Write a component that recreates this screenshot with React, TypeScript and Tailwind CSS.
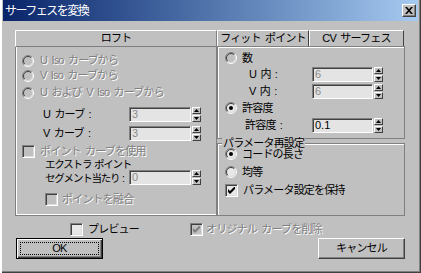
import React from 'react';

const dis = 'text-[#808080] [text-shadow:1px_1px_0_#fff]';

function Radio({ on, off }: { on?: boolean; off?: boolean }) {
  return (
    <svg width="12" height="12" viewBox="0 0 12 12" className="shrink-0">
      <circle cx="6" cy="6" r="4.5" fill={off ? '#c0c0c0' : '#e8e8e8'} />
      <path d="M2.1 9.9 A5.5 5.5 0 0 1 9.9 2.1" fill="none" stroke="#808080" />
      <path d="M9.9 2.1 A5.5 5.5 0 0 1 2.1 9.9" fill="none" stroke="#fff" />
      <path d="M2.8 9.2 A4.5 4.5 0 0 1 9.2 2.8" fill="none" stroke="#404040" />
      <path d="M9.2 2.8 A4.5 4.5 0 0 1 2.8 9.2" fill="none" stroke="#dcdcdc" />
      {on && <circle cx="6" cy="6" r="2" fill="#000" />}
    </svg>
  );
}

function Check({ on, off }: { on?: boolean; off?: boolean }) {
  return (
    <div
      className={`w-[13px] h-[13px] shrink-0 border border-t-[#808080] border-l-[#808080] border-r-white border-b-white shadow-[inset_1px_1px_0_#404040,inset_-1px_-1px_0_#dcdcdc] flex items-center justify-center ${
        off ? 'bg-[#c0c0c0]' : 'bg-[#e8e8e8]'
      }`}
    >
      {on && (
        <svg width="7" height="7" viewBox="0 0 7 7">
          <path d="M0 2v3l2 2 5-5V-1L2 4z" fill={off ? '#808080' : '#000'} />
        </svg>
      )}
    </div>
  );
}

function Spin() {
  const half =
    'h-[7px] w-[9px] bg-[#c0c0c0] border border-t-white border-l-white border-r-[#404040] border-b-[#404040] flex items-center justify-center';
  return (
    <div className="flex flex-col ml-[1px] h-[15px] justify-between shrink-0">
      <div className={half}>
        <svg width="5" height="3" viewBox="0 0 5 3">
          <path d="M2.5 0L5 3H0z" fill="#000" />
        </svg>
      </div>
      <div className={half}>
        <svg width="5" height="3" viewBox="0 0 5 3">
          <path d="M0 0h5L2.5 3z" fill="#000" />
        </svg>
      </div>
    </div>
  );
}

function Field({ value, w, off }: { value: string; w: string; off?: boolean }) {
  return (
    <div
      className={`${w} h-[15px] shrink-0 bg-[#e4e4e4] border border-t-[#808080] border-l-[#808080] border-r-white border-b-white shadow-[inset_1px_1px_0_#404040] pl-[2px] leading-[13px] tracking-normal [text-shadow:none] ${
        off ? 'text-[#8a8a8a]' : 'text-black'
      }`}
    >
      {value}
    </div>
  );
}

function Btn({ children, def }: { children: React.ReactNode; def?: boolean }) {
  return (
    <div
      className={`w-[87px] h-[21px] bg-[#c0c0c0] border ${
        def ? 'border-black' : 'border-t-white border-l-white border-r-[#404040] border-b-[#404040]'
      } ${
        def
          ? 'shadow-[inset_1px_1px_0_#fff,inset_-1px_-1px_0_#404040,inset_-2px_-2px_0_#808080]'
          : 'shadow-[inset_-1px_-1px_0_#808080]'
      } flex items-center justify-center p-[3px]`}
    >
      <div
        className={`w-full h-full flex items-center justify-center ${
          def ? 'outline-1 outline-dotted outline-black -outline-offset-1' : ''
        }`}
      >
        {children}
      </div>
    </div>
  );
}

export default function App() {
  return (
    <div className="w-[421px] h-[273px] bg-[#c0c0c0] px-[3px] flex flex-col whitespace-nowrap text-[11px] tracking-[-0.8px] [word-spacing:2px] text-black font-['Liberation_Sans','Noto_Sans_CJK_JP',sans-serif] shadow-[inset_2px_0_0_#fff,inset_-1px_-1px_0_#404040,inset_-2px_-2px_0_#808080] overflow-hidden">
      {/* title bar */}
      <div className="h-[21px] shrink-0 bg-gradient-to-r from-[#0a246a] to-[#a6caf0] flex items-center pl-[2px] pr-[2px]">
        <span className="text-white text-[12px] tracking-[-1.5px]">サーフェスを変換</span>
        <div className="ml-auto w-[14px] h-[13px] bg-[#c0c0c0] border border-t-white border-l-white border-r-[#404040] border-b-[#404040] shadow-[inset_-1px_-1px_0_#808080] flex items-center justify-center">
          <svg width="8" height="7" viewBox="0 0 8 7">
            <path d="M0 0h2l2 2.2L6 0h2L5 3.5 8 7H6L4 4.8 2 7H0l3-3.5z" fill="#000" />
          </svg>
        </div>
      </div>

      {/* main */}
      <div className="flex mt-[9px] ml-[12px] shrink-0">
        {/* left: loft */}
        <div className="w-[202px] flex flex-col">
          <div className="h-[17px] border border-t-white border-l-white border-r-[#808080] border-b-[#808080] flex items-center justify-center">
            ロフト
          </div>
          <div className={`h-[169px] border border-[#808080] border-t-0 shadow-[inset_1px_0_0_#fff,inset_0_-1px_0_#fff] pl-[6px] pt-[6px] flex flex-col ${dis}`}>
            <div className="h-[15px] shrink-0 flex items-center gap-[6px]">
              <Radio off />
              <span>U Iso カーブから</span>
            </div>
            <div className="h-[15px] shrink-0 flex items-center gap-[6px]">
              <Radio off />
              <span>V Iso カーブから</span>
            </div>
            <div className="h-[15px] shrink-0 mt-[2px] flex items-center gap-[6px]">
              <Radio off />
              <span>U および V Iso カーブから</span>
            </div>
            <div className="h-[15px] shrink-0 mt-[7px] flex items-center">
              <span className="ml-[21px] w-[86px] text-black [text-shadow:none]">U カーブ :</span>
              <Field value="3" w="w-[62px]" off />
              <Spin />
            </div>
            <div className="h-[15px] shrink-0 mt-[4px] flex items-center">
              <span className="ml-[21px] w-[86px] text-black [text-shadow:none]">V カーブ :</span>
              <Field value="3" w="w-[62px]" off />
              <Spin />
            </div>
            <div className="h-[14px] shrink-0 mt-[3px] flex items-center gap-[5px]">
              <Check off />
              <span>ポイント カーブを使用</span>
            </div>
            <div className="h-[28px] shrink-0 -mt-[1px] flex items-end">
              <div className="ml-[23px] w-[84px] leading-[14px] text-black [text-shadow:none] text-[10.5px] tracking-[-1.2px] [word-spacing:1px]">
                <div>エクストラ ポイント</div>
                <div>セグメント当たり :</div>
              </div>
              <Field value="0" w="w-[62px]" off />
              <Spin />
            </div>
            <div className="h-[14px] shrink-0 mt-[7px] ml-[23px] flex items-center gap-[4px]">
              <Check off />
              <span>ポイントを融合</span>
            </div>
          </div>
        </div>

        {/* right: tabs */}
        <div className="w-[188px] flex flex-col">
          <div className="h-[16px] flex">
            <div className="w-[92px] border border-b-0 border-t-white border-l-white border-r-[#404040] flex items-center justify-center">
              フィット ポイント
            </div>
            <div className="w-[95px] border border-b-0 border-t-white border-l-white border-r-[#404040] flex items-center justify-center">
              CV サーフェス
            </div>
          </div>
          <div className="h-[93px] border border-[#808080] shadow-[inset_1px_1px_0_#fff] pl-[7px] pt-[4px] flex flex-col">
            <div className="h-[14px] shrink-0 flex items-center gap-[5px]">
              <Radio off />
              <span>数</span>
            </div>
            <div className="h-[15px] shrink-0 mt-[2px] flex items-center">
              <span className="ml-[24px] w-[63px]">U 内 :</span>
              <Field value="6" w="w-[61px]" off />
              <Spin />
            </div>
            <div className="h-[15px] shrink-0 mt-[2px] flex items-center">
              <span className="ml-[24px] w-[63px]">V 内 :</span>
              <Field value="6" w="w-[61px]" off />
              <Spin />
            </div>
            <div className="h-[14px] shrink-0 mt-[2px] flex items-center gap-[5px]">
              <Radio on />
              <span>許容度</span>
            </div>
            <div className="h-[15px] shrink-0 mt-[3px] flex items-center">
              <span className="ml-[20px] w-[67px]">許容度 :</span>
              <Field value="0.1" w="w-[61px]" />
              <Spin />
            </div>
          </div>
          <div className="h-[73px] mt-[4px] border border-[#808080] shadow-[inset_1px_1px_0_#fff] pl-[7px] flex flex-col">
            <span className="-mt-[8px] -ml-[3px] w-fit px-[1px] bg-[#c0c0c0] leading-[14px]">パラメータ再設定</span>
            <div className="h-[14px] shrink-0 -mt-[3px] flex items-center gap-[5px]">
              <Radio on />
              <span>コードの長さ</span>
            </div>
            <div className="h-[14px] shrink-0 mt-[4px] flex items-center gap-[5px]">
              <Radio />
              <span>均等</span>
            </div>
            <div className="h-[14px] shrink-0 mt-[4px] flex items-center gap-[5px]">
              <Check on />
              <span>パラメータ設定を保持</span>
            </div>
          </div>
        </div>
      </div>

      {/* bottom checkboxes */}
      <div className="h-[13px] mt-[7px] shrink-0 flex items-center">
        <div className="ml-[67px] w-[120px] flex items-center gap-[5px]">
          <Check />
          <span>プレビュー</span>
        </div>
        <div className={`flex items-center gap-[3px] ${dis}`}>
          <Check on off />
          <span>オリジナル カーブを削除</span>
        </div>
      </div>

      {/* buttons */}
      <div className="flex mt-[2px] px-[13px] justify-between shrink-0">
        <Btn def>OK</Btn>
        <Btn>キャンセル</Btn>
      </div>
    </div>
  );
}
